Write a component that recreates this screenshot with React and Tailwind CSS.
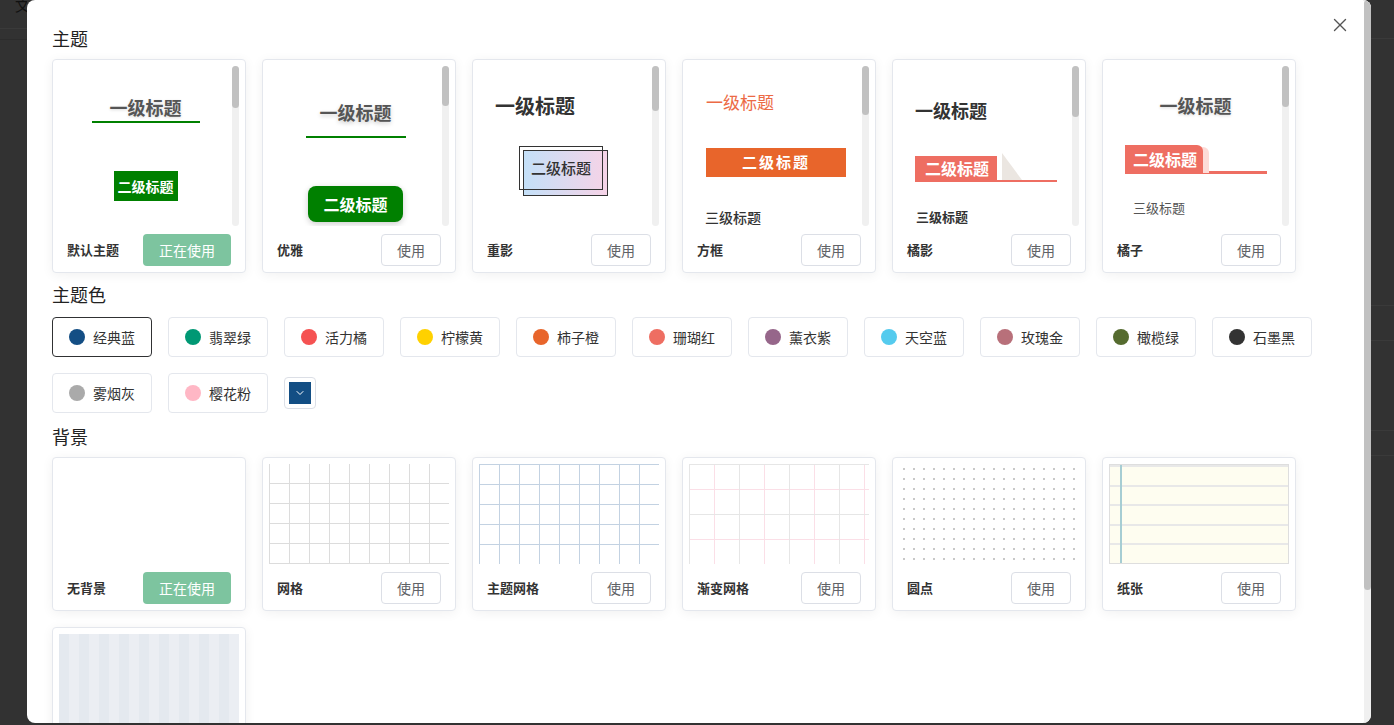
import React from "react";
import { X, ChevronDown } from "lucide-react";

const FONT = "font-['Noto_Sans_CJK_SC','Noto_Sans',sans-serif]";

function UseButton({ active }) {
  if (active) {
    return (
      <button className="h-[32px] w-[88px] rounded-[4px] bg-[#7dc49f] text-[14px] text-white">
        正在使用
      </button>
    );
  }
  return (
    <button className="h-[32px] w-[60px] rounded-[4px] border border-[#dcdfe6] bg-white text-[14px] text-[#606266]">
      使用
    </button>
  );
}

function ThemeCard({ label, active, thumb, children }) {
  return (
    <div className="flex h-[214px] w-[194px] flex-col rounded-[4px] border border-[#e4e7ed] bg-white shadow-[0_2px_12px_rgba(0,0,0,0.06)]">
      <div className="mx-[6px] mt-[6px] flex h-[160px]">
        <div className="flex-1 overflow-hidden">{children}</div>
        <div className="w-[7px] rounded-full bg-[#f0f0f0]">
          <div className="w-full rounded-full bg-[#c1c1c1]" style={{ height: thumb }} />
        </div>
      </div>
      <div className="mt-[8px] flex items-center justify-between px-[14px]">
        <span className="text-[13px] font-bold text-[#333]">{label}</span>
        <UseButton active={active} />
      </div>
    </div>
  );
}

function BgCard({ label, active, previewClass }) {
  return (
    <div className="flex h-[154px] w-[194px] flex-col rounded-[4px] border border-[#e4e7ed] bg-white shadow-[0_2px_12px_rgba(0,0,0,0.06)]">
      <div className={"mx-[6px] mt-[6px] h-[100px] " + previewClass} />
      {label ? (
        <div className="mt-[8px] flex items-center justify-between px-[14px]">
          <span className="text-[13px] font-bold text-[#333]">{label}</span>
          <UseButton active={active} />
        </div>
      ) : null}
    </div>
  );
}

const colors = [
  ["经典蓝", "#134e84"],
  ["翡翠绿", "#009874"],
  ["活力橘", "#f55252"],
  ["柠檬黄", "#ffd100"],
  ["柿子橙", "#e8652b"],
  ["珊瑚红", "#ee6e62"],
  ["薰衣紫", "#96668a"],
  ["天空蓝", "#55cbee"],
  ["玫瑰金", "#b8707a"],
  ["橄榄绿", "#556b2f"],
  ["石墨黑", "#333333"],
  ["雾烟灰", "#aaaaaa"],
  ["樱花粉", "#ffb7c5"],
];

export default function App() {
  return (
    <div className={"relative flex h-[725px] w-[1394px] overflow-hidden bg-[#323232] " + FONT}>
      {/* page behind overlay, left */}
      <div className="relative w-[27px] shrink-0 overflow-hidden">
        <div className="absolute left-[15px] top-[-5px] text-[15px] leading-[20px] text-[#111]">文</div>
        <div className="absolute left-0 top-[28px] h-px w-full bg-[#3a3a3a]" />
        <div className="absolute left-0 top-[39px] h-px w-full bg-[#2c2c2c]" />
      </div>

      {/* modal */}
      <div className="relative flex h-[723px] w-[1344px] shrink-0 overflow-hidden rounded-[8px] bg-white">
        <div className="flex-1 pl-[25px] pt-[26px]">
          <h2 className="text-[18px] leading-[24px] text-[#222]">主题</h2>
          <div className="mt-[9px] flex gap-[16px]">
            {/* 默认主题 */}
            <ThemeCard label="默认主题" active thumb={42}>
              <div className="flex flex-col items-center">
                <div className="mt-[27px] border-b-2 border-[#008000] px-[18px] text-[18px] font-bold leading-[28px] text-[#555] [text-shadow:0_1px_3px_rgba(0,0,0,0.15)]">
                  一级标题
                </div>
                <div className="mt-[48px] bg-[#008000] px-[4px] text-[14px] font-bold leading-[30px] text-white">
                  二级标题
                </div>
              </div>
            </ThemeCard>
            {/* 优雅 */}
            <ThemeCard label="优雅" thumb={40}>
              <div className="flex flex-col items-center">
                <div className="mt-[32px] border-b-2 border-[#008000] px-[14px] pb-[10px] text-[18px] font-bold leading-[28px] text-[#555] [text-shadow:0_2px_4px_rgba(0,0,0,0.2)]">
                  一级标题
                </div>
                <div className="mt-[48px] h-[36px] rounded-[8px] bg-[#008000] px-[15px] text-[16px] font-bold leading-[36px] text-white shadow-[0_2px_6px_rgba(0,0,0,0.2)]">
                  二级标题
                </div>
              </div>
            </ThemeCard>
            {/* 重影 */}
            <ThemeCard label="重影" thumb={45}>
              <div className="flex flex-col">
                <div className="ml-[16px] mt-[26px] text-[20px] font-bold leading-[28px] text-[#333]">
                  一级标题
                </div>
                <div className="relative ml-[40px] mt-[26px] w-[84px]">
                  <div className="absolute left-[4px] top-[4px] h-[46px] w-[85px] border border-[#333] bg-[linear-gradient(to_right,#c4e0f8,#f6d3e7)]" />
                  <div className="relative h-[44px] w-[84px] border border-[#333] text-center text-[15px] font-medium leading-[42px] text-[#333]">
                    二级标题
                  </div>
                </div>
              </div>
            </ThemeCard>
            {/* 方框 */}
            <ThemeCard label="方框" thumb={49}>
              <div className="flex flex-col">
                <div className="ml-[17px] mt-[24px] text-[17px] leading-[24px] text-[#ec6a45]">
                  一级标题
                </div>
                <div className="ml-[17px] mt-[34px] flex h-[29px] w-[140px] items-center justify-center bg-[#e8652b] text-[15px] font-bold tracking-[2px] text-white">
                  二级标题
                </div>
                <div className="ml-[16px] mt-[32px] text-[14px] font-medium leading-[17px] text-[#333]">
                  三级标题
                </div>
              </div>
            </ThemeCard>
            {/* 橘影 */}
            <ThemeCard label="橘影" thumb={51}>
              <div className="flex flex-col">
                <div className="ml-[16px] mt-[30px] text-[18px] font-bold leading-[28px] text-[#333]">
                  一级标题
                </div>
                <div className="relative ml-[16px] mt-[32px] h-[26px] w-[142px] border-b-2 border-[#ee6e62]">
                  <svg className="absolute bottom-0 left-[87px]" width="20" height="27" viewBox="0 0 20 27">
                    <polygon points="0,0 0,27 20,27" fill="#ebe6e1" />
                  </svg>
                  <div className="relative h-[24px] w-[82px] bg-[#ee6e62] pl-[10px] text-[16px] font-bold leading-[24px] text-white">
                    二级标题
                  </div>
                </div>
                <div className="ml-[17px] mt-[28px] text-[13px] font-bold leading-[14px] text-[#333]">
                  三级标题
                </div>
              </div>
            </ThemeCard>
            {/* 橘子 */}
            <ThemeCard label="橘子" thumb={41}>
              <div className="flex flex-col">
                <div className="mt-[25px] text-center text-[18px] font-bold leading-[28px] text-[#555] [text-shadow:0_1px_3px_rgba(0,0,0,0.15)]">
                  一级标题
                </div>
                <div className="relative ml-[16px] mt-[26px] h-[29px] w-[142px]">
                  <div className="absolute bottom-0 left-0 h-[3px] w-full bg-[#ee6e62]" />
                  <div className="absolute left-[76px] top-[2px] h-[26px] w-[8px] rounded-tr-[6px] bg-[#fddbd7]" />
                  <div className="relative h-[29px] w-[78px] rounded-tr-[6px] bg-[#ee6e62] pl-[8px] text-[16px] font-bold leading-[28px] text-white">
                    二级标题
                  </div>
                </div>
                <div className="ml-[24px] mt-[24px] text-[13px] leading-[20px] text-[#555]">
                  三级标题
                </div>
              </div>
            </ThemeCard>
          </div>

          <h2 className="mt-[9px] text-[18px] leading-[24px] text-[#222]">主题色</h2>
          <div className="mt-[11px] flex flex-wrap items-center gap-[16px]">
            {colors.map(([name, c], i) => (
              <div
                key={name}
                className={
                  "flex h-[40px] w-[100px] items-center gap-[8px] rounded-[4px] border bg-white pl-[16px] " +
                  (i === 0 ? "border-[#303133]" : "border-[#e4e7ed]")
                }
              >
                <span className="h-[16px] w-[16px] rounded-full" style={{ background: c }} />
                <span className="text-[14px] text-[#333]">{name}</span>
              </div>
            ))}
            <div className="flex h-[32px] w-[32px] items-center justify-center rounded-[4px] border border-[#dcdfe6]">
              <div className="flex h-[22px] w-[22px] items-center justify-center bg-[#134e84]">
                <ChevronDown size={12} color="#ffffff" strokeWidth={2} />
              </div>
            </div>
          </div>

          <h2 className="mt-[11px] text-[18px] leading-[24px] text-[#222]">背景</h2>
          <div className="mt-[9px] flex w-[1260px] flex-wrap gap-[16px]">
            <BgCard label="无背景" active previewClass="bg-white" />
            <BgCard
              label="网格"
              previewClass="bg-[linear-gradient(to_right,#dcdcdc_1px,transparent_1px),linear-gradient(to_bottom,transparent_19px,#dcdcdc_19px)] bg-[size:20px_20px]"
            />
            <BgCard
              label="主题网格"
              previewClass="bg-[linear-gradient(to_right,#c3d2e2_1px,transparent_1px),linear-gradient(to_bottom,#c3d2e2_1px,transparent_1px)] bg-[size:20px_20px]"
            />
            <BgCard
              label="渐变网格"
              previewClass="bg-[linear-gradient(to_right,#e6e6e6_1px,transparent_1px),linear-gradient(to_bottom,#e6e6e6_1px,transparent_1px),linear-gradient(to_right,transparent_25px,#fbdfe7_25px,#fbdfe7_26px,transparent_26px),linear-gradient(to_bottom,transparent_25px,#fbdfe7_25px,#fbdfe7_26px,transparent_26px)] bg-[size:50px_50px]"
            />
            <BgCard
              label="圆点"
              previewClass="bg-[radial-gradient(circle,#c8c8c8_1px,transparent_1.2px)] bg-[size:10px_10px]"
            />
            <BgCard
              label="纸张"
              previewClass="border border-[#dedede] bg-[#fefdf0] bg-[linear-gradient(to_right,transparent_10px,#a6cdd3_10px,#a6cdd3_12px,transparent_12px),repeating-linear-gradient(to_bottom,#e8e8e8_0px,#e8e8e8_2px,#fefdf0_2px,#fefdf0_19.6px)]"
            />
            <BgCard
              label=""
              previewClass="bg-[repeating-linear-gradient(to_right,#e4e9ef_0px,#e4e9ef_10px,#ebeef3_10px,#ebeef3_20px)]"
            />
          </div>
        </div>

        {/* modal scrollbar */}
        <div className="w-[7px] shrink-0 bg-[#f0f0f0]">
          <div className="h-[590px] w-full rounded-full bg-[#c1c1c1]" />
        </div>

        <button className="absolute right-[20px] top-[14px] text-[#555]">
          <X size={22} strokeWidth={1.5} />
        </button>
      </div>

      {/* page behind overlay, right */}
      <div className="relative flex-1">
        <div className="absolute left-0 top-[38px] h-px w-full bg-[#3a3a3a]" />
        <div className="absolute left-0 top-[305px] h-px w-full bg-[#3a3a3a]" />
        <div className="absolute left-0 top-[340px] h-px w-full bg-[#3a3a3a]" />
        <div className="absolute left-0 top-[430px] h-px w-full bg-[#3a3a3a]" />
        <div className="absolute left-0 top-[455px] h-px w-full bg-[#3a3a3a]" />
      </div>
    </div>
  );
}
